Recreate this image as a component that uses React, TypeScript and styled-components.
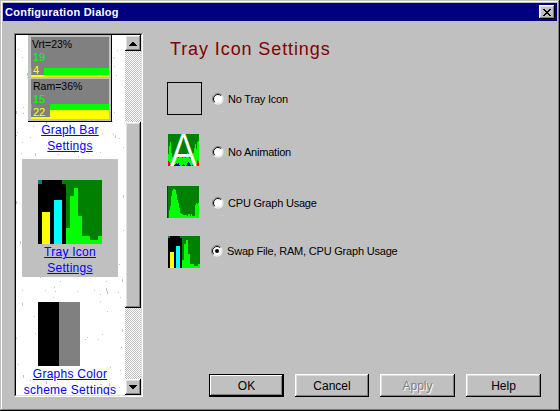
import React, { useMemo } from "react";
import styled, { createGlobalStyle, css } from "styled-components";

const Global = createGlobalStyle`
  html, body { margin: 0; padding: 0; background: #c0c0c0; }
  * { box-sizing: border-box; }
`;

const raised = css`
  box-shadow: inset -1px -1px 0 #000, inset 1px 1px 0 #fff, inset -2px -2px 0 #808080, inset 2px 2px 0 #dfdfdf;
`;

const Window = styled.div`
  width: 560px;
  height: 411px;
  display: flex;
  flex-direction: column;
  padding: 3px;
  background: #c0c0c0;
  overflow: hidden;
  font-family: "Liberation Sans", Arial, sans-serif;
  box-shadow: inset -1px -1px 0 #000, inset 1px 1px 0 #c0c0c0, inset -2px -2px 0 #808080, inset 2px 2px 0 #fff;
`;

const TitleBar = styled.div`
  height: 18px;
  flex: none;
  background: #000080;
  display: flex;
  align-items: center;
  justify-content: space-between;
  padding: 0 2px 0 2px;
`;

const TitleText = styled.span`
  color: #fff;
  font-size: 11px;
  font-weight: 700;
  letter-spacing: 0.25px;
`;

const CloseButton = styled.div`
  width: 16px;
  height: 14px;
  background: #c0c0c0;
  display: flex;
  align-items: center;
  justify-content: center;
  ${raised}
`;

const Body = styled.div`
  flex: 1;
  min-height: 0;
  display: flex;
  padding: 12px 0 0 11px;
`;

const ListFrame = styled.div`
  width: 129px;
  height: 364px;
  flex: none;
  border: 1px solid;
  border-color: #808080 #fff #fff #808080;
`;

const ListInner = styled.div`
  height: 100%;
  display: flex;
  border: 1px solid;
  border-color: #000 #dfdfdf #dfdfdf #000;
`;

const List = styled.div`
  position: relative;
  width: 109px;
  height: 360px;
  flex: none;
  overflow: hidden;
  background: #fff;
  display: flex;
  flex-direction: column;
  align-items: center;
  gap: 5px;
  padding-right: 1px;
`;

const Speckles = styled.svg`
  position: absolute;
  left: 0;
  top: 0;
`;

const ListItem = styled.div<{ $selected?: boolean; $top: number }>`
  position: relative;
  width: 96px;
  flex: none;
  display: flex;
  flex-direction: column;
  align-items: center;
  padding-top: ${(p) => p.$top}px;
  padding-bottom: ${(p) => (p.$selected ? 1 : 0)}px;
  background: ${(p) => (p.$selected ? "#c0c0c0" : "transparent")};
`;

const ItemLink = styled.a`
  display: block;
  height: 16px;
  line-height: 16px;
  font-size: 12px;
  letter-spacing: 0.25px;
  color: #0000ff;
  text-decoration: underline;
  white-space: nowrap;
`;

const Scrollbar = styled.div`
  width: 16px;
  height: 360px;
  flex: none;
  display: flex;
  flex-direction: column;
`;

const ScrollButton = styled.div`
  width: 16px;
  height: 16px;
  flex: none;
  background: #c0c0c0;
  display: flex;
  align-items: center;
  justify-content: center;
  ${raised}
`;

const Track = styled.div<{ $height?: number }>`
  flex: ${(p) => (p.$height ? `0 0 ${p.$height}px` : "1")};
  background-color: #fff;
  background-image: conic-gradient(#c0c0c0 25%, #fff 0 50%, #c0c0c0 0 75%, #fff 0);
  background-size: 2px 2px;
`;

const Thumb = styled.div`
  flex: 0 0 186px;
  background: #c0c0c0;
  ${raised}
`;

const Main = styled.div`
  flex: 1;
  min-width: 0;
  display: flex;
  flex-direction: column;
  padding: 4px 16px 11px 24px;
`;

const Heading = styled.h1`
  margin: 0 0 21px 3px;
  height: 24px;
  line-height: 24px;
  font-size: 18px;
  font-weight: 400;
  letter-spacing: 0.9px;
  color: #800000;
`;

const Options = styled.div`
  flex: 1;
  display: flex;
  flex-direction: column;
`;

const OptionRow = styled.div<{ $gap: number }>`
  display: flex;
  align-items: center;
  margin-top: ${(p) => p.$gap}px;
`;

const IconSlot = styled.div<{ $indent?: number }>`
  width: 35px;
  flex: none;
  display: flex;
  padding-left: ${(p) => p.$indent ?? 0}px;
`;

const EmptyIcon = styled.div`
  width: 35px;
  height: 33px;
  border: 1px solid #000;
`;

const Choice = styled.label<{ $shift?: number; $left?: number }>`
  display: flex;
  align-items: center;
  gap: 4px;
  margin-left: ${(p) => p.$left ?? 10}px;
  margin-top: ${(p) => p.$shift ?? 0}px;
  font-size: 11px;
  letter-spacing: -0.2px;
  color: #000;
`;

const Footer = styled.div`
  display: flex;
  justify-content: flex-end;
  gap: 11px;
`;

const DialogButton = styled.div<{ $primary?: boolean; $disabled?: boolean; $narrow?: boolean }>`
  width: ${(p) => (p.$narrow ? 74 : 75)}px;
  height: 23px;
  display: flex;
  align-items: center;
  justify-content: center;
  font-size: 12px;
  background: #c0c0c0;
  color: ${(p) => (p.$disabled ? "#808080" : "#000")};
  text-shadow: ${(p) => (p.$disabled ? "1px 1px 0 #fff" : "none")};
  ${(p) =>
    p.$primary
      ? css`
          box-shadow: inset 0 0 0 1px #000, inset -2px -2px 0 #000, inset 2px 2px 0 #fff, inset -3px -3px 0 #808080;
        `
      : css`
          box-shadow: inset -1px -1px 0 #000, inset 1px 1px 0 #fff, inset -2px -2px 0 #808080, inset 2px 2px 0 #dfdfdf;
        `}
`;

function SpeckleField() {
  const dots = useMemo(() => {
    let seed = 4711;
    const next = (n: number) => {
      seed = (seed * 1103515245 + 12345) & 0x7fffffff;
      return (seed >> 8) % n;
    };
    const out: { x: number; y: number; h: number }[] = [];
    for (let i = 0; i < 170; i++) {
      out.push({ x: next(109), y: next(360), h: next(6) === 0 ? 3 : 1 });
    }
    return out;
  }, []);
  return (
    <Speckles width="109" height="360" shapeRendering="crispEdges" aria-hidden>
      {dots.map((d, i) => (
        <rect key={i} x={d.x} y={d.y} width="1" height={d.h} fill="#c4c4c4" />
      ))}
    </Speckles>
  );
}

function GraphBarPicture() {
  const label = { fontFamily: "'Liberation Sans', Arial, sans-serif" };
  return (
    <svg width="84" height="87" viewBox="0 0 84 87" shapeRendering="crispEdges" style={{ display: "block", position: "relative", flex: "none" }}>
      <rect width="84" height="87" fill="#000" />
      <rect width="83" height="86" fill="#c0c0c0" />
      <rect x="3" y="2" width="78" height="40" fill="#808080" />
      <rect x="3" y="44" width="78" height="40" fill="#808080" />
      <rect x="16" y="33" width="65" height="7" fill="#00ff00" />
      <rect x="3" y="40" width="78" height="2" fill="#ffff00" />
      <rect x="3" y="33" width="1" height="7" fill="#00ff00" />
      <rect x="22" y="69" width="59" height="6" fill="#00ff00" />
      <rect x="22" y="75" width="59" height="9" fill="#ffff00" />
      <rect x="3" y="82" width="19" height="2" fill="#ffff00" />
      <rect x="3" y="69" width="1" height="6" fill="#00ff00" />
      <g style={label} textRendering="auto" shapeRendering="auto">
        <text x="4" y="13" fontSize="10.5" fill="#000">Vrt=23%</text>
        <text x="5" y="26" fontSize="11" fill="#00ff00">19</text>
        <text x="5" y="39" fontSize="11" fill="#ffff00">4</text>
        <text x="5" y="55" fontSize="10.5" fill="#000">Ram=36%</text>
        <text x="5" y="68" fontSize="11" fill="#00ff00">15</text>
        <text x="5" y="81" fontSize="11" fill="#ffff00">22</text>
      </g>
    </svg>
  );
}

function TrayChart({ size }: { size: number }) {
  const cols: [number, number, number][] = [
    [28, 4, 48],
    [32, 4, 16],
    [36, 4, 8],
    [40, 4, 36],
    [44, 8, 56],
    [52, 8, 60],
    [60, 4, 56],
  ];
  return (
    <svg width={size} height={size} viewBox="0 0 64 64" shapeRendering="crispEdges" style={{ display: "block", flex: "none" }}>
      <rect width="64" height="64" fill="#000" />
      <rect x="28" width="36" height="64" fill="#008000" />
      <rect x="24" width="4" height="4" fill="#008000" />
      <rect width="4" height="4" fill="#008080" />
      <rect x="4" y="32" width="8" height="32" fill="#ffff00" />
      <rect x="16" y="20" width="8" height="44" fill="#00ffff" />
      {cols.map(([x, w, y]) => (
        <rect key={x} x={x} y={y} width={w} height={64 - y} fill="#00ff00" />
      ))}
    </svg>
  );
}

function SplitPicture() {
  return (
    <svg width="64" height="64" viewBox="0 0 64 64" shapeRendering="crispEdges" style={{ display: "block", flex: "none" }}>
      <rect width="21" height="64" fill="#000" />
      <rect x="21" width="21" height="64" fill="#808080" />
    </svg>
  );
}

function AnimationIcon() {
  const bright = [12, 20, 24, 13, 9, 8, 6, 11, 10, 12, 8, 9, 12, 9, 8, 10, 9, 8, 10, 13, 9, 8, 7, 9, 11, 13, 18, 22, 17, 24, 25];
  const low = [5, 4, 2, 1, 0, 0, 1, 2, 3, 2, 3, 1, 0, 0, 1, 2, 1, 0, 1, 3, 4, 3, 1, 0, 1, 2, 1, 0, 2, 6, 5];
  return (
    <svg width="31" height="32" viewBox="0 0 31 32" style={{ display: "block", flex: "none" }}>
      <g shapeRendering="crispEdges">
        <rect width="31" height="32" fill="#008000" />
        {bright.map((h, i) => (
          <rect key={i} x={i} y={32 - h} width="1" height={h} fill="#00ff00" />
        ))}
        {low.map((h, i) => (
          <rect key={i} x={i} y={32 - h} width="1" height={h} fill={i < 4 || i > 26 ? "#ff0000" : "#0000ff"} />
        ))}
      </g>
      <text x="15.5" y="32" textAnchor="middle" fontSize="43" fontWeight="300" fill="#fff" fontFamily="Inter, 'Liberation Sans', Arial, sans-serif">A</text>
    </svg>
  );
}

function CpuIcon() {
  const h = [0, 0, 8, 12, 22, 27, 29, 29, 28, 24, 18, 15, 10, 5, 4, 4, 3, 3, 3, 3, 2, 4, 4, 2, 4, 2, 2, 2, 13, 15, 14, 15];
  return (
    <svg width="32" height="32" viewBox="0 0 32 32" shapeRendering="crispEdges" style={{ display: "block", flex: "none" }}>
      <rect width="32" height="32" fill="#008000" />
      <rect width="1" height="32" fill="#004040" />
      {h.map((v, i) => (
        <rect key={i} x={i} y={32 - v} width="1" height={v} fill="#00ff00" />
      ))}
    </svg>
  );
}

function Radio({ checked }: { checked?: boolean }) {
  return (
    <svg width="12" height="12" viewBox="0 0 12 12" style={{ display: "block", flex: "none" }}>
      <circle cx="6" cy="6" r="5.5" fill="#fff" />
      <path d="M9.9 2.1A5.5 5.5 0 0 0 2.1 9.9" fill="none" stroke="#808080" strokeWidth="1" />
      <path d="M9.2 2.8A4.5 4.5 0 0 0 2.8 9.2" fill="none" stroke="#000" strokeWidth="1" />
      <path d="M2.8 9.2A4.5 4.5 0 0 0 9.2 2.8" fill="none" stroke="#dfdfdf" strokeWidth="1" />
      {checked && <circle cx="6" cy="6" r="2" fill="#000" />}
    </svg>
  );
}

function Arrow({ down }: { down?: boolean }) {
  return (
    <svg width="8" height="5" viewBox="0 0 8 5" shapeRendering="crispEdges">
      <path d={down ? "M0 0H8L4 5Z" : "M4 0L8 5H0Z"} fill="#000" />
    </svg>
  );
}

export default function App() {
  return (
    <Window>
      <Global />
      <TitleBar>
        <TitleText>Configuration Dialog</TitleText>
        <CloseButton>
          <svg width="8" height="7" viewBox="0 0 8 7" shapeRendering="crispEdges">
            <path d="M0 0h2v1h1v1h2V1h1V0h2v1H7v1H6v1H5v1h1v1h1v1h1v1H6V6H5V5H3v1H2v1H0V6h1V5h1V4h1V3H2V2H1V1H0z" fill="#000" />
          </svg>
        </CloseButton>
      </TitleBar>
      <Body>
        <ListFrame>
          <ListInner>
            <List>
              <SpeckleField />
              <ListItem $top={0}>
                <GraphBarPicture />
                <ItemLink>Graph Bar</ItemLink>
                <ItemLink>Settings</ItemLink>
              </ListItem>
              <ListItem $selected $top={21}>
                <TrayChart size={64} />
                <ItemLink>Tray Icon</ItemLink>
                <ItemLink>Settings</ItemLink>
              </ListItem>
              <ListItem $top={20}>
                <SplitPicture />
                <ItemLink>Graphs Color</ItemLink>
                <ItemLink>scheme Settings</ItemLink>
              </ListItem>
            </List>
            <Scrollbar>
              <ScrollButton><Arrow /></ScrollButton>
              <Track $height={71} />
              <Thumb />
              <Track />
              <ScrollButton><Arrow down /></ScrollButton>
            </Scrollbar>
          </ListInner>
        </ListFrame>
        <Main>
          <Heading>Tray Icon Settings</Heading>
          <Options>
            <OptionRow $gap={0}>
              <IconSlot><EmptyIcon /></IconSlot>
              <Choice $shift={1}><Radio />No Tray Icon</Choice>
            </OptionRow>
            <OptionRow $gap={19}>
              <IconSlot $indent={1}><AnimationIcon /></IconSlot>
              <Choice $shift={4}><Radio />No Animation</Choice>
            </OptionRow>
            <OptionRow $gap={20}>
              <IconSlot><CpuIcon /></IconSlot>
              <Choice $shift={2}><Radio />CPU Graph Usage</Choice>
            </OptionRow>
            <OptionRow $gap={18}>
              <IconSlot $indent={1}><TrayChart size={32} /></IconSlot>
              <Choice $shift={-2} $left={9}><Radio checked />Swap File, RAM, CPU Graph Usage</Choice>
            </OptionRow>
          </Options>
          <Footer>
            <DialogButton $primary>OK</DialogButton>
            <DialogButton $narrow>Cancel</DialogButton>
            <DialogButton $disabled>Apply</DialogButton>
            <DialogButton>Help</DialogButton>
          </Footer>
        </Main>
      </Body>
    </Window>
  );
}
